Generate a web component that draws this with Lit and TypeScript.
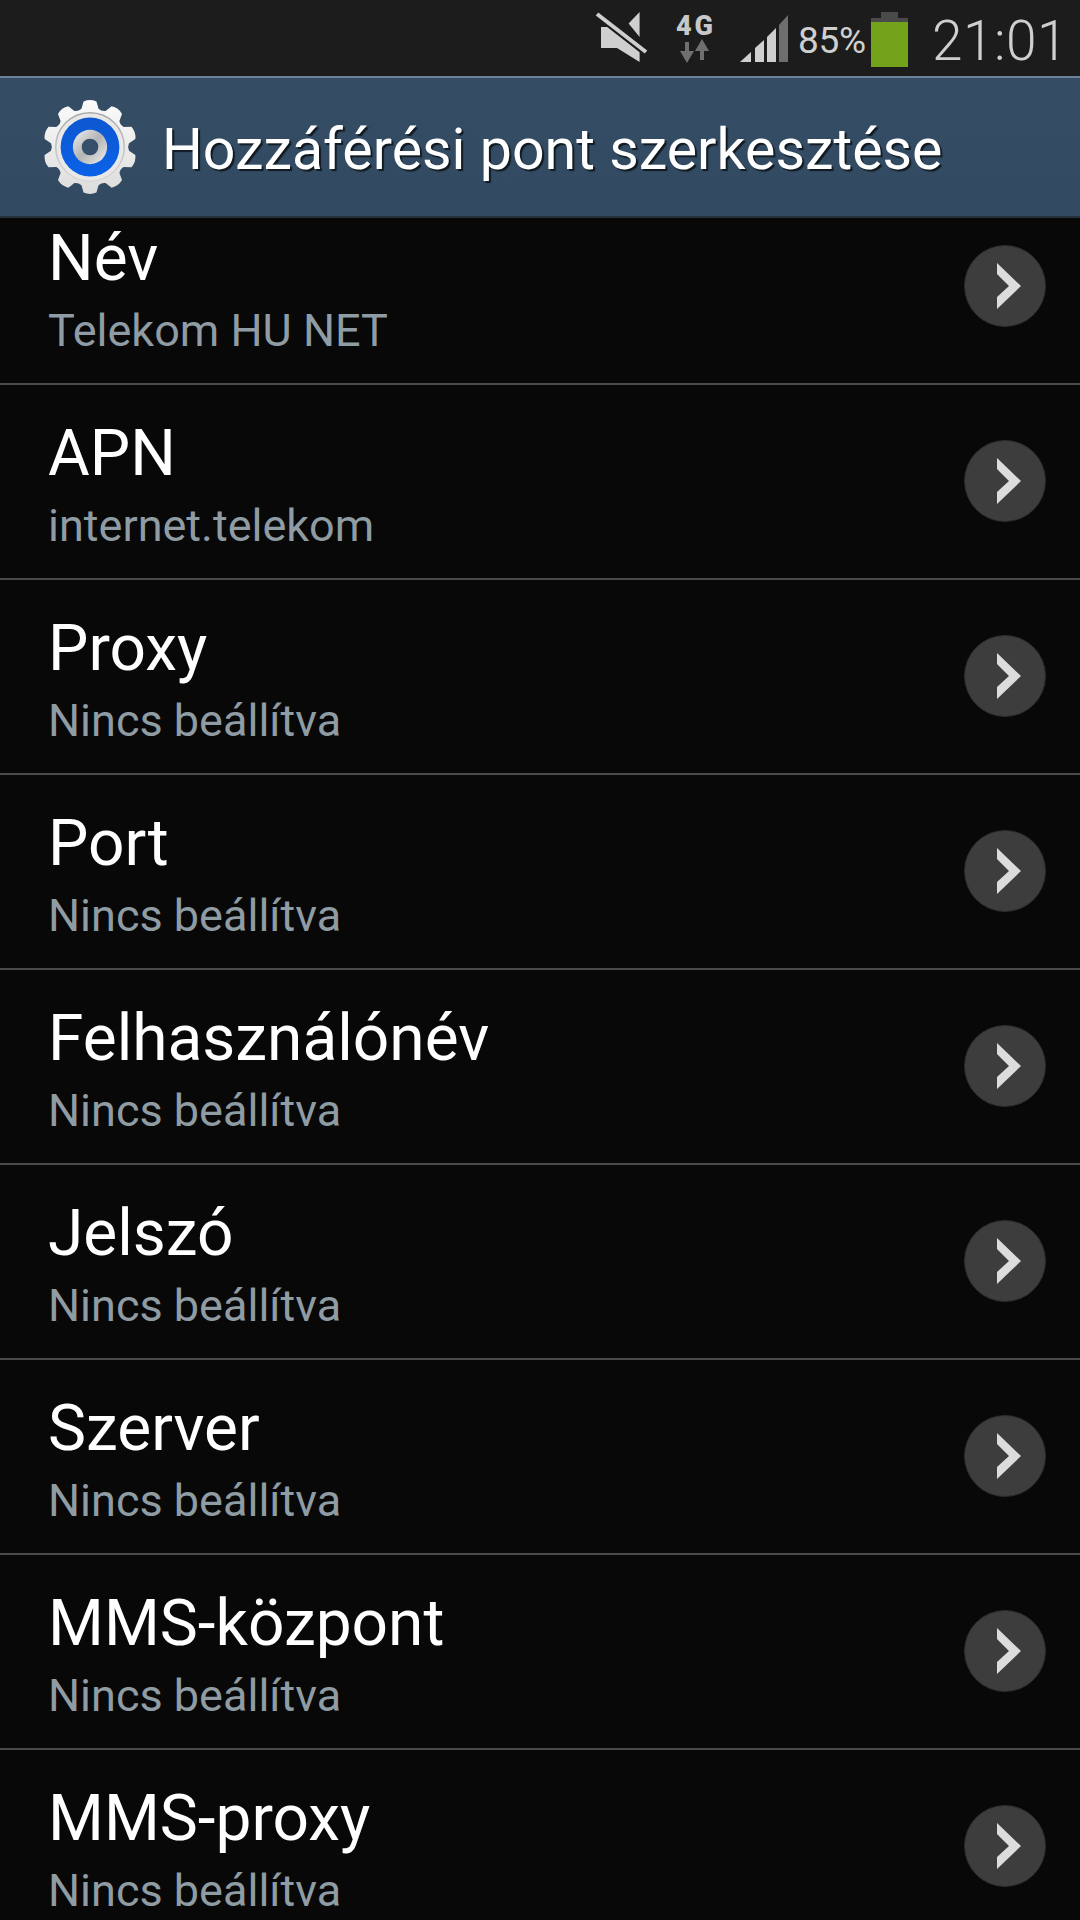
import { LitElement, html, css, svg } from "lit";
import { customElement } from "lit/decorators.js";

const rows = [
  ["Név", "Telekom HU NET"],
  ["APN", "internet.telekom"],
  ["Proxy", "Nincs beállítva"],
  ["Port", "Nincs beállítva"],
  ["Felhasználónév", "Nincs beállítva"],
  ["Jelszó", "Nincs beállítva"],
  ["Szerver", "Nincs beállítva"],
  ["MMS-központ", "Nincs beállítva"],
  ["MMS-proxy", "Nincs beállítva"],
];

function gearPath(): string {
  const cx = 50, cy = 50, n = 10;
  let d = "";
  for (let i = 0; i < n; i++) {
    const a = (i * 2 * Math.PI) / n - Math.PI / 2;
    const p = (r: number, off: number) => {
      const t = a + off;
      return `${(cx + r * Math.cos(t)).toFixed(2)} ${(cy + r * Math.sin(t)).toFixed(2)}`;
    };
    d += `${i === 0 ? "M" : "L"}${p(40, -0.22)} L${p(47, -0.14)} Q${p(49.5, 0)} ${p(47, 0.14)} L${p(40, 0.22)} Q${p(38, 0.314)} ${p(40, 0.408)} `;
  }
  return d + "Z";
}

@customElement("app-root")
export class AppRoot extends LitElement {
  static styles = css`
    :host { display: block; width: 1080px; height: 1920px; overflow: hidden; background: #080808; font-family: Roboto, "Liberation Sans", sans-serif; }
    .status { height: 76px; background: #1c1c1c; display: flex; align-items: center; justify-content: flex-end; color: #cfcfcf; }
    .status svg { display: block; flex: none; overflow: visible; }
    .pct { font-size: 37px; letter-spacing: -0.3px; margin-left: 10px; margin-top: 4px; }
    .batt { margin-left: 5px; margin-top: 2px; }
    .time { font-size: 55px; font-weight: 300; margin-left: 24px; margin-right: 12px; margin-top: 6px; letter-spacing: 0.5px; }
    .mute { margin-right: 30px; }
    .net { margin-right: 26px; }
    .bar { height: 142px; box-sizing: border-box; border-top: 2px solid #6d8296; border-bottom: 2px solid #25303a; background: linear-gradient(#344d65, #324a61); display: flex; align-items: center; padding-left: 41px; }
    .title { color: #fff; font-size: 57.3px; margin-left: 23px; margin-top: 4px; text-shadow: 2px 2px 1px #111a22; white-space: nowrap; }
    .list { height: 1702px; overflow: hidden; }
    .rows { margin-top: -28px; }
    .row { height: 195px; box-sizing: border-box; border-bottom: 2px solid #4a4a4a; display: flex; align-items: center; padding: 8px 34px 0 48px; }
    .text { flex: 1; min-width: 0; }
    .name { color: #fff; font-size: 64px; line-height: 70px; white-space: nowrap; }
    .sub { color: #8f9ca3; font-size: 45px; line-height: 54px; margin-top: 10px; white-space: nowrap; }
    .go { width: 82px; height: 82px; flex: none; margin-top: -10px; }
  `;

  render() {
    return html`
      <div class="status">
        <svg class="mute" width="49" height="52" viewBox="0 0 49 52">
          <path d="M4 15 H13 L42.6 40 V50 L20 36 H4 Z M31.6 11.6 L42.6 0 V25 Z" fill="#cfcfcf" />
          <path d="M0 2 L49 40" stroke="#1c1c1c" stroke-width="8" />
          <path d="M0 2 L49 40" stroke="#cfcfcf" stroke-width="4" />
        </svg>
        <svg class="net" width="38" height="52" viewBox="0 0 38 52">
          <text x="0" y="23" font-family="Roboto, sans-serif" font-weight="900" font-size="27" textLength="37" fill="#c8c8c8">4G</text>
          <path d="M10 30 V39 H15 L8 51 L1 39 H6 V30 Z" transform="translate(3 0)" fill="#6f6f6f" />
          <path d="M24 48 V39 H19 L26 27 L33 39 H28 V48 Z" fill="#6f6f6f" />
        </svg>
        <svg width="48" height="50" viewBox="0 0 48 50">
          <path d="M0 49 L11 39 V49 Z" fill="#cfcfcf" />
          <path d="M15 35 L24 27 V49 H15 Z" fill="#cfcfcf" />
          <path d="M27 24 L36 15 V49 H27 Z" fill="#cfcfcf" />
          <path d="M39 12 L48 2 V49 H39 Z" fill="#6e6e6e" />
        </svg>
        <span class="pct">85%</span>
        <svg class="batt" width="37" height="55" viewBox="0 0 37 55">
          <rect x="10" y="0" width="17" height="8" fill="#4a4a4a" />
          <rect x="0" y="6" width="37" height="9" fill="#4a4a4a" />
          <rect x="0" y="10" width="37" height="45" fill="#72a31b" />
        </svg>
        <span class="time">21:01</span>
      </div>
      <div class="bar">
        <svg width="98" height="98" viewBox="0 0 100 100">
          <defs>
            <linearGradient id="g" x1="0" y1="0" x2="0" y2="1"><stop offset="0" stop-color="#fbfbfb" /><stop offset="1" stop-color="#dcdcdc" /></linearGradient>
            <linearGradient id="r" x1="0" y1="0" x2="0" y2="1"><stop offset="0" stop-color="#a8a8a8" /><stop offset="1" stop-color="#d8d8d8" /></linearGradient>
            <linearGradient id="b" x1="0" y1="0" x2="0" y2="1"><stop offset="0" stop-color="#0d57d0" /><stop offset="1" stop-color="#0a62e8" /></linearGradient>
            <linearGradient id="i" x1="0" y1="0" x2="1" y2="1"><stop offset="0" stop-color="#f0f0f0" /><stop offset="0.5" stop-color="#b4b4b4" /><stop offset="1" stop-color="#f0f0f0" /></linearGradient>
          </defs>
          <path d="${gearPath()}" fill="url(#g)" />
          <circle cx="50" cy="50" r="35" fill="#e8e8e8" stroke="url(#r)" stroke-width="1.5" />
          <circle cx="50" cy="50" r="30" fill="url(#b)" />
          <circle cx="50" cy="50" r="17.5" fill="url(#i)" />
          <circle cx="50" cy="50" r="8.5" fill="#37506a" />
        </svg>
        <span class="title">Hozzáférési pont szerkesztése</span>
      </div>
      <div class="list">
        <div class="rows">
          ${rows.map(
            ([n, s]) => html`
              <div class="row">
                <div class="text">
                  <div class="name">${n}</div>
                  <div class="sub">${s}</div>
                </div>
                <svg class="go" viewBox="0 0 82 82">
                  <circle cx="41" cy="41" r="40.5" fill="#3d3d3d" stroke="#2c2c2c" />
                  ${svg`<path d="M33 18 L57 41 L33 64 V52 L45 41 L33 29 Z" fill="#dcdcdc" />`}
                </svg>
              </div>
            `
          )}
        </div>
      </div>
    `;
  }
}
